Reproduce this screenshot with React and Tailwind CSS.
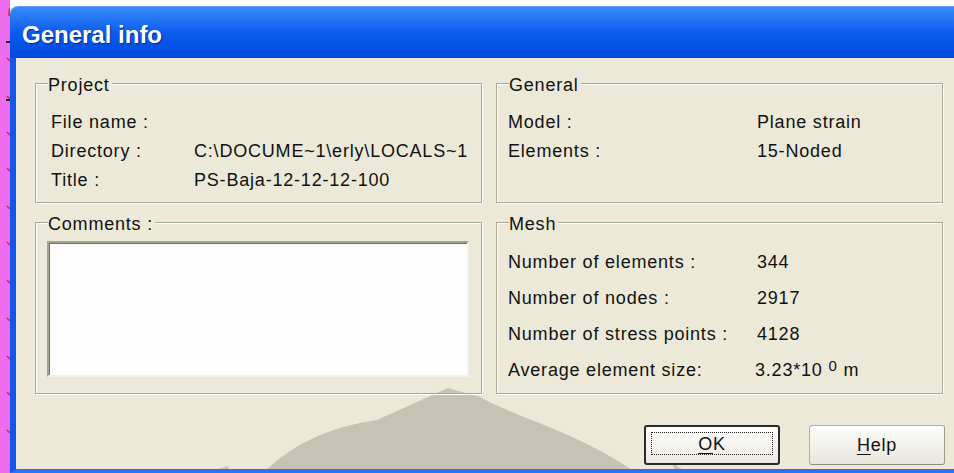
import React from 'react';

const projectRows = [
  { label: 'File name :', value: '' },
  { label: 'Directory :', value: 'C:\\DOCUME~1\\erly\\LOCALS~1' },
  { label: 'Title :', value: 'PS-Baja-12-12-12-100' },
];

const generalRows = [
  { label: 'Model :', value: 'Plane strain' },
  { label: 'Elements :', value: '15-Noded' },
];

const meshRows = [
  { label: 'Number of elements :', value: '344' },
  { label: 'Number of nodes :', value: '2917' },
  { label: 'Number of stress points :', value: '4128' },
];

function GroupBox({ label, className = '', children }) {
  return (
    <div className={`relative border border-[#aca899] shadow-[inset_1px_1px_0_#ffffff,1px_1px_0_#ffffff] ${className}`}>
      <span className="absolute -top-[10px] left-[12px] bg-[#ece9d8] pr-[2px] leading-[22px] whitespace-nowrap">
        {label}
      </span>
      {children}
    </div>
  );
}

// magenta strip on the far left with its little tick marks
function SideStrip() {
  const ticks = [58, 96, 132, 168, 206, 242, 280, 318, 356, 392, 430];
  return (
    <svg width="10" height="473" className="shrink-0 block">
      <rect width="10" height="473" fill="#ee6cee" />
      {ticks.map((y) => (
        <line key={y} x1="7" y1={y} x2="10" y2={y + 3} stroke="#e8202a" strokeWidth="1.5" />
      ))}
      <line x1="6" y1="42" x2="10" y2="42" stroke="#111" strokeWidth="2" />
      <line x1="6" y1="100" x2="10" y2="100" stroke="#111" strokeWidth="2" />
      <path d="M9 16 Q9 10 10 8" stroke="#e8202a" strokeWidth="1.5" fill="none" />
    </svg>
  );
}

function Watermark() {
  return (
    <svg className="absolute inset-0 pointer-events-none" width="938" height="411" viewBox="0 0 938 411">
      <path
        d="M247 415 Q290 372 361 362 L432 330 C445 334 455 336 464 339 C500 360 560 372 625 418 Z"
        fill="#c6c3b5"
      />
      <path d="M189 415 L212 408 L214 415 Z" fill="#c6c3b5" />
      <path d="M656 405 L672 415 L660 415 Z" fill="#c6c3b5" />
    </svg>
  );
}

export default function App() {
  return (
    <div className="w-[954px] h-[473px] bg-white flex overflow-hidden font-['Liberation_Sans',Arial,sans-serif] text-[18px] tracking-[0.8px] text-[#111]">
      <SideStrip />
      <div className="flex-1 flex flex-col pt-[6px]">
        {/* title bar */}
        <div className="h-[52px] shrink-0 rounded-tl-[8px] bg-gradient-to-b from-[#3a8af9] via-[#0a5cf0] to-[#0049da] border-t border-[#5ea0ff] flex items-center pl-[12px] pt-[4px]">
          <span className="text-white font-bold text-[24px] tracking-normal [text-shadow:1px_1px_1px_#0a2a8a]">
            General info
          </span>
        </div>

        {/* dialog body */}
        <div className="relative flex-1 bg-[#ece9d8] border-l-[6px] border-l-[#1455ea] border-b-[4px] border-b-[#2d72f2] pl-[19px] pt-[25px]">
          <Watermark />

          <div className="relative grid grid-cols-[447px_447px] grid-rows-[120px_172px] gap-x-[14px] gap-y-[19px]">
            <GroupBox label="Project" className="pl-[15px] pt-[24px]">
              {projectRows.map((r) => (
                <div key={r.label} className="flex leading-[29px] whitespace-nowrap">
                  <span className="w-[143px] shrink-0">{r.label}</span>
                  <span>{r.value}</span>
                </div>
              ))}
            </GroupBox>

            <GroupBox label="General" className="pl-[11px] pt-[24px]">
              {generalRows.map((r) => (
                <div key={r.label} className="flex leading-[29px] whitespace-nowrap">
                  <span className="w-[249px] shrink-0">{r.label}</span>
                  <span>{r.value}</span>
                </div>
              ))}
            </GroupBox>

            <GroupBox label="Comments :" className="pl-[11px] pt-[18px]">
              <div className="w-[422px] h-[136px] bg-[#fdfdfd] border-2 border-t-[#a6a390] border-l-[#a6a390] border-b-[#f4f2e8] border-r-[#f4f2e8] shadow-[inset_1px_1px_0_#716f64]" />
            </GroupBox>

            <GroupBox label="Mesh" className="pl-[11px] pt-[21px]">
              {meshRows.map((r) => (
                <div key={r.label} className="flex leading-[36px] whitespace-nowrap">
                  <span className="w-[249px] shrink-0">{r.label}</span>
                  <span>{r.value}</span>
                </div>
              ))}
              <div className="flex leading-[36px] whitespace-nowrap">
                <span className="w-[247px] shrink-0">Average element size:</span>
                <span>
                  3.23*10 <sup className="text-[15px] -top-[5px]">0</sup> m
                </span>
              </div>
            </GroupBox>
          </div>

          {/* buttons */}
          <div className="relative w-[910px] mt-[31px] flex justify-end gap-[29px]">
            <button className="w-[136px] h-[40px] rounded-[3px] border-2 border-[#2a2a2a] bg-gradient-to-b from-[#ffffff] to-[#ebe9e0] pt-[5px] pb-[8px] px-[5px]">
              <span className="flex h-full w-full items-center justify-center border border-dotted border-[#222] pt-[2px]">
                <span className="underline underline-offset-[3px]">O</span>K
              </span>
            </button>
            <button className="w-[136px] h-[40px] rounded-[3px] border border-[#b3b1a4] border-b-[#8f8d80] border-r-[#9e9c8f] bg-gradient-to-b from-[#fdfdfb] to-[#e8e6dc] flex items-center justify-center">
              <span>
                <span className="underline underline-offset-[3px]">H</span>elp
              </span>
            </button>
          </div>
        </div>
      </div>
    </div>
  );
}
